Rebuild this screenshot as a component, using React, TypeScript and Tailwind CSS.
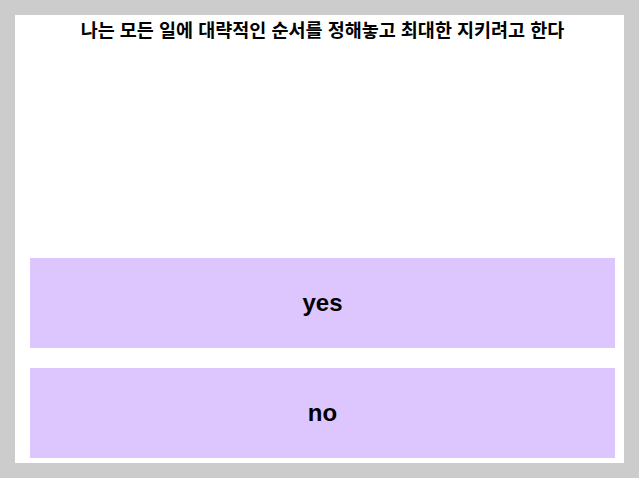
export default function App() {
  const answers = ["yes", "no"];

  return (
    <div className="w-[639px] h-[478px] bg-[#cccccc] p-[15px] font-['Liberation_Sans','Noto_Sans_CJK_KR',sans-serif]">
      <div className="w-full h-full bg-white flex flex-col pl-[15px] pr-[9px] pb-[5px]">
        <h1 className="pt-[3px] text-center text-[18.5px] leading-[26px] font-bold text-black">
          나는 모든 일에 대략적인 순서를 정해놓고 최대한 지키려고 한다
        </h1>
        <div className="flex-1" />
        <div className="flex flex-col gap-[20px]">
          {answers.map((a) => (
            <button
              key={a}
              className="w-full h-[90px] bg-[#ddc6fd] text-[24px] font-bold text-black flex items-center justify-center"
            >
              {a}
            </button>
          ))}
        </div>
      </div>
    </div>
  );
}
